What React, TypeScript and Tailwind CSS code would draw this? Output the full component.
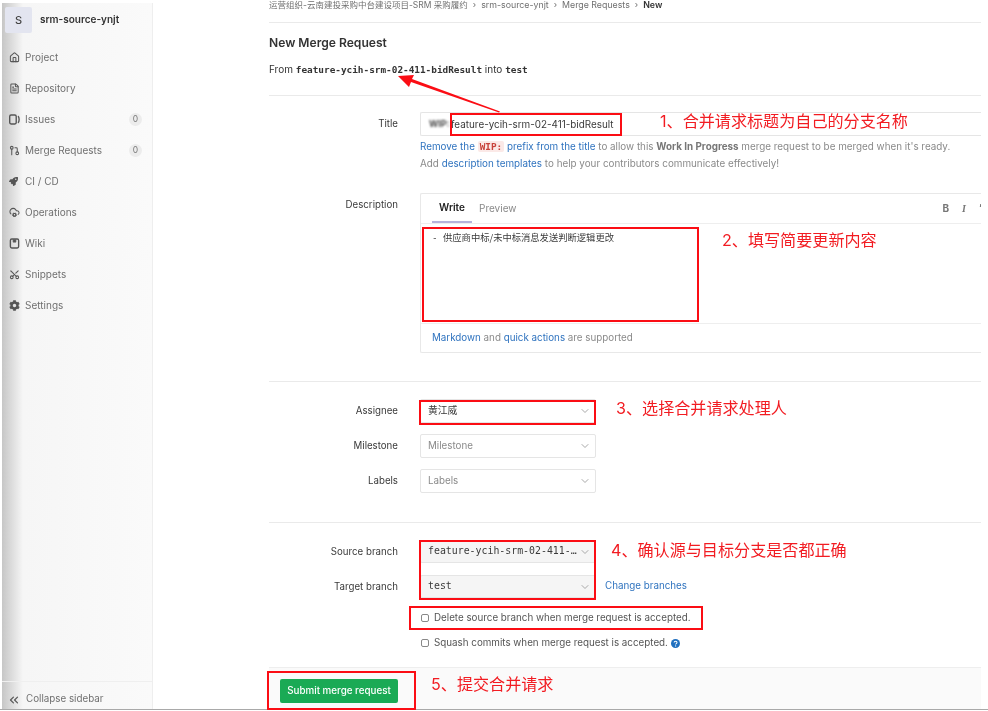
import React from "react";
import { Home, FileText, GitPullRequest, CloudCog, Scissors, ChevronDown, ChevronsLeft } from "lucide-react";
import { FaCog, FaRocket } from "react-icons/fa";

const IssuesIcon = () => (
  <svg width="11" height="11" viewBox="0 0 16 16" fill="none" stroke="currentColor" strokeWidth="2">
    <rect x="1" y="1.500" width="9.500" height="13" rx="2" />
    <path d="M13 3c2.300 1.500 2.300 8.500 0 10" />
  </svg>
);

const WikiIcon = () => (
  <svg width="11" height="11" viewBox="0 0 16 16" fill="none" stroke="currentColor" strokeWidth="2">
    <rect x="2" y="1.500" width="12" height="13" rx="2" />
    <path d="M6 2v4h4V2" fill="currentColor" strokeWidth="1" />
  </svg>
);

const HelpFilled = () => (
  <svg width="9" height="9" viewBox="0 0 16 16" className="ml-[3px]">
    <circle cx="8" cy="8" r="8" fill="#1f6fbf" />
    <path d="M5.500 6.200c0-3 5.200-3 5.200 0 0 2-2.500 1.800-2.500 3.600" fill="none" stroke="#fff" strokeWidth="1.800" />
    <circle cx="8.200" cy="12.400" r="1.100" fill="#fff" />
  </svg>
);

const nav: { label: string; icon: React.ReactNode; badge?: string }[] = [
  { label: "Project", icon: <Home size={11} strokeWidth={2.2} /> },
  { label: "Repository", icon: <FileText size={11} strokeWidth={2.2} /> },
  { label: "Issues", icon: <IssuesIcon />, badge: "0" },
  { label: "Merge Requests", icon: <GitPullRequest size={11} strokeWidth={2.2} />, badge: "0" },
  { label: "CI / CD", icon: <FaRocket size={9} /> },
  { label: "Operations", icon: <CloudCog size={11} strokeWidth={2.2} /> },
  { label: "Wiki", icon: <WikiIcon /> },
  { label: "Snippets", icon: <Scissors size={11} strokeWidth={2.2} className="-rotate-90" /> },
  { label: "Settings", icon: <FaCog size={11} /> },
];

const mono = { fontFamily: '"DejaVu Sans Mono", monospace' };

function Row({ label, value, muted, className, h, bg, monoVal, extra }: { label: string; value: string; muted?: boolean; className: string; h: string; bg?: string; monoVal?: boolean; extra?: React.ReactNode }) {
  return (
    <div className={`flex items-center ${className}`}>
      <div className="w-[129px] text-right text-[9.700px] leading-[14px] text-[#3a3a3a]">{label}</div>
      <div className={`ml-[22px] flex w-[176px] items-center justify-between rounded-[2px] border border-[#e5e5e5] pl-[7px] pr-[4px] ${h} ${bg ?? "bg-white"}`}>
        <span className={`truncate ${monoVal ? "text-[9.900px]" : "text-[9.800px]"} ${muted ? "text-[#8a8a8a]" : "text-[#3a3a3a]"}`} style={monoVal ? mono : undefined}>{value}</span>
        <ChevronDown size={12} className="ml-[2px] shrink-0 text-[#a8a8a8]" />
      </div>
      {extra}
    </div>
  );
}

const Box = ({ className }: { className: string }) => (
  <div className={`pointer-events-none absolute border-2 border-[#fb0d14] ${className}`} />
);

const Note = ({ className, children }: { className: string; children: React.ReactNode }) => (
  <div className={`absolute whitespace-nowrap text-[16.100px] leading-[20px] text-[#f21c22] ${className}`}>{children}</div>
);

export default function App() {
  return (
    <div
      className="relative h-[711px] w-[988px] overflow-hidden bg-white blur-[0.35px]"
      style={{ fontFamily: 'Inter, "Liberation Sans", "Noto Sans CJK SC", sans-serif' }}
    >
      <div className="flex h-[710px] border-b border-[#a9a9a9]">
        {/* Sidebar */}
        <aside className="ml-[2px] mt-[3px] flex w-[151px] shrink-0 flex-col border-r border-[#eeeeee] bg-gradient-to-r from-[#c6c6c6] from-0% via-[#f6f6f6] via-[14%] to-[#fafafa] text-[#6e6e6e]">
          <div className="flex h-[38px] items-start pl-[3px] pt-[4px]">
            <div className="flex h-[26px] w-[27px] items-center justify-center rounded-[2px] bg-[#e3e5f0] text-[11px] font-medium text-[#444]">S</div>
            <div className="ml-[8px] mt-[5px] text-[10px] font-semibold leading-[14px] text-[#333]">srm-source-ynjt</div>
          </div>
          <nav className="flex flex-col pt-[1px]">
            {nav.map((n) => (
              <div key={n.label} className="flex h-[31px] items-center pl-[7px] pr-[10px] text-[10px] text-[#707070]">
                <span className="flex w-[16px] shrink-0 items-center text-[#555]">{n.icon}</span>
                <span className="flex-1">{n.label}</span>
                {n.badge && (
                  <span className="flex h-[13px] w-[13px] items-center justify-center rounded-full bg-[#ececec] text-[8.500px] text-[#777]">{n.badge}</span>
                )}
              </div>
            ))}
          </nav>
          <div className="mt-auto flex h-[28px] items-center border-t border-[#efefef] pl-[5px] pt-[8px] text-[9.800px] text-[#707070]">
            <ChevronsLeft size={14} className="mr-[5px] text-[#555]" />
            Collapse sidebar
          </div>
        </aside>

        {/* Main */}
        <main className="ml-[116px] flex w-[712px] shrink-0 flex-col">
          <div className="flex h-[23px] items-start gap-[5px] border-b border-[#eaeaea] text-[8.800px] leading-[10px] text-[#707070]">
            <span className="whitespace-nowrap text-[8.500px]">运营组织-云南建投采购中台建设项目-SRM 采购履约</span>
            <span>›</span>
            <span>srm-source-ynjt</span>
            <span>›</span>
            <span>Merge Requests</span>
            <span>›</span>
            <span className="font-semibold text-[#333]">New</span>
          </div>

          <div className="h-[73px] border-b border-[#eaeaea]">
            <h1 className="mt-[13px] text-[12.100px] font-semibold leading-[14px] text-[#333]">New Merge Request</h1>
            <p className="mt-[12px] text-[10px] leading-[14px] text-[#333]">
              From <b className="text-[9.400px]" style={mono}>feature-ycih-srm-02-411-bidResult</b> into <b className="text-[9.400px]" style={mono}>test</b>
            </p>
          </div>

          {/* Title */}
          <div className="mt-[16px] flex items-start">
            <div className="w-[129px] pt-[5px] text-right text-[9.700px] leading-[14px] text-[#3a3a3a]">Title</div>
            <div className="ml-[22px] flex-1">
              <div className="flex h-[24px] items-center rounded-l-[2px] border-y border-l border-[#e5e5e5] pl-[8px] text-[9.900px] text-[#3a3a3a]">
                <span className="mr-[1px] w-[21px] text-[9px] font-semibold text-[#333] blur-[1px]">WIP:</span>
                feature-ycih-srm-02-411-bidResult
              </div>
              <p className="mt-[1.500px] whitespace-nowrap text-[9.850px] leading-[17px] text-[#8a8a8a]">
                <span className="text-[#2f73bf]">Remove the </span>
                <span className="rounded-[2px] bg-[#fbe9e7] px-[2px] text-[9.400px] font-bold text-[#c7423a]" style={mono}>WIP:</span>
                <span className="text-[#2f73bf]"> prefix from the title</span> to allow this <b className="text-[#777]">Work In Progress</b> merge request to be merged when it's ready.
              </p>
              <p className="whitespace-nowrap text-[9.850px] leading-[17px] text-[#8a8a8a]">
                Add <span className="text-[#2f73bf]">description templates</span> to help your contributors communicate effectively!
              </p>
            </div>
          </div>

          {/* Description */}
          <div className="mt-[21.500px] flex items-start">
            <div className="w-[129px] pt-[5px] text-right text-[9.700px] leading-[14px] text-[#3a3a3a]">Description</div>
            <div className="ml-[22px] flex h-[160px] flex-1 flex-col rounded-l-[2px] border-y border-l border-[#e8e8e8]">
              <div className="flex h-[30px] shrink-0 items-stretch justify-between border-b border-[#eeeeee] pl-[11px] text-[10px]">
                <div className="flex">
                  <span className="flex w-[40px] items-center justify-center border-b-2 border-[#b5b3dc] font-semibold text-[#222]">Write</span>
                  <span className="ml-[7px] flex items-center text-[#8a8a8a]">Preview</span>
                </div>
                <div className="flex items-center gap-[13px] text-[10px] text-[#777]">
                  <b>B</b>
                  <i className="font-bold" style={{ fontFamily: '"Liberation Serif", serif' }}>I</i>
                  <b className="w-[2px] overflow-hidden">”</b>
                </div>
              </div>
              <div className="h-[99px] shrink-0 pl-[11px] pt-[6px] text-[9.300px] leading-[14px] text-[#3a3a3a]" style={{ fontFamily: '"Noto Sans CJK SC", sans-serif' }}>
                <span className="inline-block w-[11px]" style={mono}>-</span>供应商中标/未中标消息发送判断逻辑更改
              </div>
              <div className="flex flex-1 items-center border-t border-[#eeeeee] pl-[11px] text-[9.800px] text-[#8a8a8a]">
                <span>
                  <span className="text-[#2f73bf]">Markdown</span> and <span className="text-[#2f73bf]">quick actions</span> are supported
                </span>
              </div>
            </div>
          </div>

          <div className="mt-[28px] h-px bg-[#eaeaea]" />

          <Row label="Assignee" value="黄江威" className="mt-[17px]" h="h-[24px]" />
          <Row label="Milestone" value="Milestone" muted className="mt-[11px]" h="h-[24px]" />
          <Row label="Labels" value="Labels" muted className="mt-[11px]" h="h-[24px]" />

          <div className="mt-[29px] h-px bg-[#eaeaea]" />

          <Row label="Source branch" value="feature-ycih-srm-02-411-bidResult" monoVal className="mt-[17px]" h="h-[23px]" bg="bg-[#f5f5f5]" />
          <Row
            label="Target branch"
            value="test"
            monoVal
            className="mt-[12px]"
            h="h-[23px]"
            bg="bg-[#f5f5f5]"
            extra={<span className="ml-[9px] text-[9.800px] text-[#2f73bf]">Change branches</span>}
          />

          <div className="ml-[152px] mt-[13px] flex h-[14px] items-center text-[9.800px] text-[#555]">
            <span className="mr-[5px] h-[8px] w-[8px] rounded-[2px] border border-[#888] bg-white" />
            Delete source branch when merge request is accepted.
          </div>
          <div className="ml-[152px] mt-[11px] flex h-[14px] items-center text-[9.800px] text-[#555]">
            <span className="mr-[5px] h-[8px] w-[8px] rounded-[2px] border border-[#888] bg-white" />
            Squash commits when merge request is accepted.
            <HelpFilled />
          </div>

          <div className="mt-[17px] flex flex-1 items-start border-t border-[#eeeeee] bg-[#fafafa] pl-[11px] pt-[11px]">
            <button className="flex h-[24px] w-[118px] items-center justify-center rounded-[2px] bg-[#1aaa55] text-[9.800px] font-medium text-white">Submit merge request</button>
          </div>
        </main>
      </div>

      {/* Annotation overlay */}
      <Box className="left-[450px] top-[113px] h-[23px] w-[172px]" />
      <Box className="left-[422px] top-[227px] h-[95px] w-[277px]" />
      <Box className="left-[419px] top-[400px] h-[25px] w-[177px]" />
      <Box className="left-[419px] top-[540px] h-[60px] w-[177px]" />
      <Box className="left-[409px] top-[606px] h-[24px] w-[294px]" />
      <Box className="left-[267px] top-[671px] h-[39px] w-[149px]" />

      <svg className="pointer-events-none absolute left-[395px] top-[70px]" width="110" height="45" viewBox="0 0 110 45">
        <polygon points="105,41.500 17,9 19,5 3,6 14,17 16,12 104,42.500" fill="#fb0d14" />
      </svg>

      <Note className="left-[660px] top-[111px]">1、合并请求标题为自己的分支名称</Note>
      <Note className="left-[722px] top-[230px]">2、填写简要更新内容</Note>
      <Note className="left-[616px] top-[398px]">3、选择合并请求处理人</Note>
      <Note className="left-[611px] top-[540px]">4、确认源与目标分支是否都正确</Note>
      <Note className="left-[431px] top-[674px]">5、提交合并请求</Note>
    </div>
  );
}
